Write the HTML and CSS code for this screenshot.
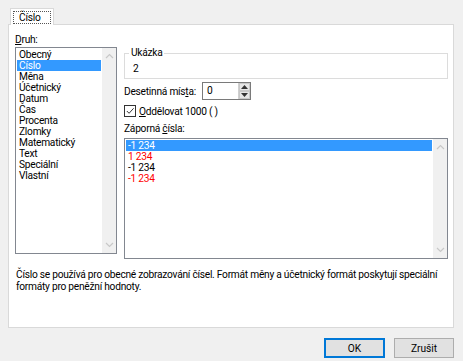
FILE: index.html
```html
<!DOCTYPE html>
<html>
<head>
  <meta charset="utf-8">
  <title>Formát buněk</title>
  <link rel="stylesheet" href="styles.css">
</head>
<body>
  <div class="tabs">
    <div class="tab"><span>Číslo</span></div>
  </div>
  <div class="panel">
    <div class="cols">
      <div class="left">
        <p class="lbl"><u>D</u>ruh:</p>
        <div class="list kinds">
          <ul>
            <li>Obecný</li>
            <li class="sel">Číslo</li>
            <li>Měna</li>
            <li>Účetnický</li>
            <li>Datum</li>
            <li>Čas</li>
            <li>Procenta</li>
            <li>Zlomky</li>
            <li>Matematický</li>
            <li>Text</li>
            <li>Speciální</li>
            <li>Vlastní</li>
          </ul>
          <div class="sbar">
            <svg width="9" height="6" viewBox="0 0 9 6"><path d="M1 5 L4.5 1.5 L8 5" fill="none" stroke="#c8c8c8" stroke-width="1.2"/></svg>
            <svg width="9" height="6" viewBox="0 0 9 6"><path d="M1 1 L4.5 4.5 L8 1" fill="none" stroke="#c8c8c8" stroke-width="1.2"/></svg>
          </div>
        </div>
      </div>
      <div class="right">
        <fieldset class="sample">
          <legend>Ukázka</legend>
          <div class="val">2</div>
        </fieldset>
        <div class="row dec">
          <span class="dec-lbl">Desetinná mís<u>t</u>a:</span>
          <div class="spin">
            <span class="num">0</span>
            <div class="arrows">
              <div class="arr"><svg width="7" height="4" viewBox="0 0 7 4"><path d="M3.5 0 L7 4 L0 4Z" fill="#333"/></svg></div>
              <div class="arr"><svg width="7" height="4" viewBox="0 0 7 4"><path d="M0 0 L7 0 L3.5 4Z" fill="#333"/></svg></div>
            </div>
          </div>
        </div>
        <div class="row chk">
          <span class="box"><svg width="11" height="11" viewBox="0 0 11 11"><path d="M2 5.5 L4.5 8 L9.5 2.5" fill="none" stroke="#222" stroke-width="1"/></svg></span>
          <span><u>O</u>ddělovat 1000 ( )</span>
        </div>
        <p class="lbl neg-lbl">Záporná <u>č</u>ísla:</p>
        <div class="list negs">
          <ul>
            <li class="sel">-1 234</li>
            <li class="red">1 234</li>
            <li>-1 234</li>
            <li class="red">-1 234</li>
          </ul>
          <div class="sbar">
            <svg width="9" height="6" viewBox="0 0 9 6"><path d="M1 5 L4.5 1.5 L8 5" fill="none" stroke="#c8c8c8" stroke-width="1.2"/></svg>
            <svg width="9" height="6" viewBox="0 0 9 6"><path d="M1 1 L4.5 4.5 L8 1" fill="none" stroke="#c8c8c8" stroke-width="1.2"/></svg>
          </div>
        </div>
      </div>
    </div>
    <p class="desc">Číslo se používá pro obecné zobrazování čísel. Formát měny a účetnický formát poskytují speciální formáty pro peněžní hodnoty.</p>
  </div>
  <div class="buttons">
    <button class="btn ok">OK</button>
    <button class="btn">Zrušit</button>
  </div>
</body>
</html>
```

FILE: styles.css
```css
* { box-sizing: border-box; }
body {
    margin: 0;
    width: 463px;
    height: 361px;
    background: #f0f0f0;
    font-family: Roboto, "Noto Sans", sans-serif;
    font-size: 10.2px;
    letter-spacing: -0.25px;
    color: #000;
    overflow: hidden;
}
u { text-decoration-thickness: 1px; text-underline-offset: 1px; }
p { margin: 0; }
ul { list-style: none; margin: 0; padding: 0; }

.tabs {
    display: flex;
    padding: 8px 0 0 10px;
}
.tab {
    position: relative;
    z-index: 1;
    width: 44px;
    height: 17px;
    margin-bottom: -1px;
    background: #fff;
    border: 1px solid #d9d9d9;
    border-bottom: none;
    padding: 2px 2px 0 2px;
}
.tab span {
    display: block;
    height: 13px;
    line-height: 11px;
    border: 1px dotted #555;
    padding-left: 5px;
}

.panel {
    margin: 0 9px 0 8px;
    height: 304px;
    background: #fff;
    border: 1px solid #d9d9d9;
    padding: 8px 5px 0 6px;
}
.cols {
    display: flex;
    gap: 7px;
}
.left { width: 102px; }
.right { width: 324px; display: flex; flex-direction: column; padding-top: 14px; }

.lbl { line-height: 13px; height: 14px; }

.list {
    display: flex;
    border: 1px solid #828790;
    background: #fff;
}
.list ul { flex: 1; padding: 1px 1px 0 1px; }
.list li { line-height: 11px; height: 11px; padding-left: 2px; white-space: nowrap; }
.list li.sel { background: #3399ff; color: #fff; }
.list li.red { color: #ff0000; }
.sbar {
    width: 14px;
    background: #f0f0f0;
    display: flex;
    flex-direction: column;
    justify-content: space-between;
    align-items: center;
    padding: 5px 0 5px 0;
}
.kinds { height: 207px; }
.negs { height: 121px; margin-top: 3px; }

.sample {
    margin: 0;
    padding: 4px 8px 0 8px;
    height: 32px;
    border: 1px solid #dcdcdc;
    border-radius: 0;
}
.sample legend { padding: 0 1px 0 2px; margin-left: -4px; line-height: 12px; }
.sample .val { line-height: 12px; }

.row { display: flex; align-items: center; white-space: nowrap; }
.dec { margin-top: 3px; height: 18px; }
.dec-lbl { width: 78px; }
.spin {
    width: 49px;
    height: 18px;
    border: 1px solid #7a7a7a;
    display: flex;
}
.num { flex: 1; padding-left: 4px; line-height: 16px; }
.arrows { width: 12px; display: flex; flex-direction: column; border-left: 1px solid #d0d0d0; }
.arr {
    flex: 1;
    background: #e6e6e6;
    display: flex;
    align-items: center;
    justify-content: center;
    border: 1px solid #c8c8c8;
}
.chk { margin-top: 5px; height: 12px; gap: 3px; }
.box {
    width: 12px;
    height: 12px;
    border: 1px solid #333;
    display: flex;
    align-items: center;
    justify-content: center;
    background: #fff;
}
.box svg { width: 10px; height: 10px; }
.neg-lbl { margin-top: 5px; height: 13px; line-height: 13px; }

.desc {
    margin-top: 10px;
    padding-left: 1px;
    line-height: 12px;
    width: 432px;
}

.buttons {
    display: flex;
    justify-content: flex-end;
    gap: 9px;
    padding: 10px 9px 0 0;
}
.btn {
    width: 60px;
    height: 20px;
    font-family: Roboto, "Noto Sans", sans-serif;
    font-size: 10.2px;
    background: #e1e1e1;
    border: 1px solid #adadad;
    padding: 0;
    color: #000;
}
.btn.ok { border: 2px solid #0078d7; width: 61px; }
```
